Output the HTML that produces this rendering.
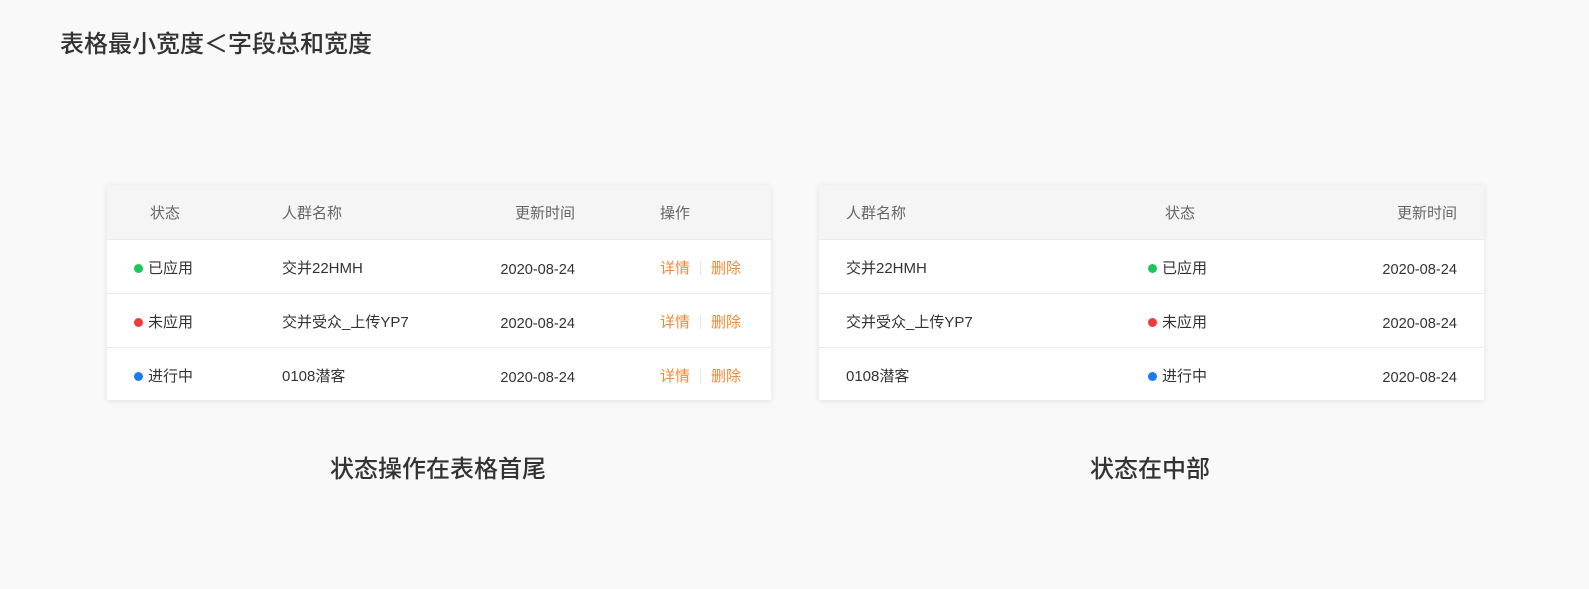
<!DOCTYPE html>
<html><head><meta charset="utf-8"><style>
body{margin:0;width:1589px;height:589px;background:#f9f9f9;font-family:"Liberation Sans","Noto Sans CJK SC",sans-serif;position:relative;overflow:hidden;color:#333}
.a{position:absolute;white-space:nowrap}
.t{position:absolute;top:185px;height:215px;background:#fff;box-shadow:0 1px 6px rgba(0,0,0,0.1)}
.h{position:absolute;left:0;right:0;top:0;height:54px;background:#f5f5f5;border-bottom:1px solid #ebebeb}
.r{position:absolute;left:0;right:0;height:53px;border-bottom:1px solid #ececec}
.c{position:absolute;font-size:15px;line-height:18px;white-space:nowrap}
.hc{color:#666;top:20px}
.d{display:inline-block;width:9px;height:9px;border-radius:50%;margin-right:5px;vertical-align:0px}
.o{color:#f0893a}
.sep{display:inline-block;width:1px;height:14px;background:#e5e5e5;margin:0 10px;vertical-align:-2px}
.x{top:20px}.y{top:21px;font-size:14.6px}
</style></head><body>
<div class="a" style="left:60px;top:24px;font-size:24px;color:#333;font-weight:500">表格最小宽度＜字段总和宽度</div>

<div class="t" style="left:107px;width:664px">
<div class="h"><span class="c hc" style="left:43px">状态</span><span class="c hc" style="left:175px">人群名称</span><span class="c hc" style="right:196px">更新时间</span><span class="c hc" style="left:553px">操作</span></div>
<div class="r" style="top:55px"><span class="c x" style="left:27px"><i class="d" style="background:#1ec45c"></i>已应用</span><span class="c x" style="left:175px">交并22HMH</span><span class="c y" style="right:196px">2020-08-24</span><span class="c o x" style="left:553px">详情<i class="sep"></i>删除</span></div>
<div class="r" style="top:109px"><span class="c x" style="left:27px"><i class="d" style="background:#ef3b3b"></i>未应用</span><span class="c x" style="left:175px">交并受众_上传YP7</span><span class="c y" style="right:196px">2020-08-24</span><span class="c o x" style="left:553px">详情<i class="sep"></i>删除</span></div>
<div class="r" style="top:163px;border:0"><span class="c x" style="left:27px"><i class="d" style="background:#1a7cf5"></i>进行中</span><span class="c x" style="left:175px">0108潜客</span><span class="c y" style="right:196px">2020-08-24</span><span class="c o x" style="left:553px">详情<i class="sep"></i>删除</span></div>
</div>

<div class="t" style="left:819px;width:665px">
<div class="h"><span class="c hc" style="left:27px">人群名称</span><span class="c hc" style="left:346px">状态</span><span class="c hc" style="right:27px">更新时间</span></div>
<div class="r" style="top:55px"><span class="c x" style="left:27px">交并22HMH</span><span class="c x" style="left:329px"><i class="d" style="background:#1ec45c"></i>已应用</span><span class="c y" style="right:27px">2020-08-24</span></div>
<div class="r" style="top:109px"><span class="c x" style="left:27px">交并受众_上传YP7</span><span class="c x" style="left:329px"><i class="d" style="background:#ef3b3b"></i>未应用</span><span class="c y" style="right:27px">2020-08-24</span></div>
<div class="r" style="top:163px;border:0"><span class="c x" style="left:27px">0108潜客</span><span class="c x" style="left:329px"><i class="d" style="background:#1a7cf5"></i>进行中</span><span class="c y" style="right:27px">2020-08-24</span></div>
</div>

<div class="a" style="left:330px;top:449px;font-size:24px;font-weight:500">状态操作在表格首尾</div>
<div class="a" style="left:1090px;top:449px;font-size:24px;font-weight:500">状态在中部</div>
</body></html>
